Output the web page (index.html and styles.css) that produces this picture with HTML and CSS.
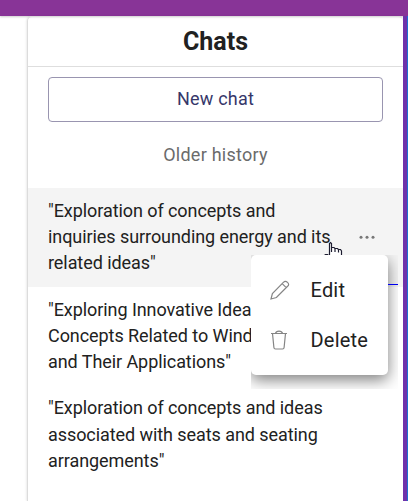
FILE: index.html
```
<!DOCTYPE html>
<html lang="en">
<head>
    <meta charset="UTF-8">
    <meta name="viewport" content="width=device-width, initial-scale=1.0">
    <title>Chats</title>
    <link rel="stylesheet" href="styles.css">
</head>
<body>
    <div class="topbar"></div>
    <div class="page">
        <div class="chat-panel">
            <div class="chat-header">
                <h1>Chats</h1>
            </div>
            <div class="chat-actions">
                <button class="new-chat">New chat</button>
            </div>
            <p class="history-title">Older history</p>
            <ul class="chat-list">
                <li class="chat-item active">
                    <span class="chat-name">"Exploration of concepts and<br>inquiries surrounding energy and its<br>related ideas"</span>
                    <svg class="more" width="16" height="4" viewBox="0 0 16 4">
                        <circle cx="2" cy="2.2" r="1.5"/>
                        <circle cx="8" cy="2.2" r="1.5"/>
                        <circle cx="14" cy="2.2" r="1.5"/>
                    </svg>
                </li>
                <li class="chat-item">
                    <span class="chat-name">"Exploring Innovative Ideas<br>Concepts Related to Wind<br>and Their Applications"</span>
                </li>
                <li class="chat-item">
                    <span class="chat-name">"Exploration of concepts and ideas<br>associated with seats and seating<br>arrangements"</span>
                </li>
            </ul>
        </div>
        <div class="page-edge"></div>
    </div>

    <!-- pointer -->
    <svg class="cursor" width="15" height="22" viewBox="0 0 15 22">
        <path d="M1.5 18V1.5L2.5 .5 3.5 1.5V5.5H6.5L7.5 6.5H9.5L10.5 7.5H12.5L13.5 9V18Z" fill="#fff"/>
        <path d="M1.5 15V1.5L2.5 .5 3.5 1.5V10M4 5.5H6L7 6.5V10M7 6.5H9.5L10.5 7.5V10.5M10.5 7.5H12.5L13.5 9V18M-3.5 13.5L-2.5 12.5H-.5L1.5 14.5" fill="none" stroke="#1c1c30" stroke-width="1.2"/>
    </svg>

    <div class="menu-wrap">
        <div class="menu-line"></div>
        <div class="menu">
            <div class="menu-item">
                <svg class="menu-icon" width="20" height="20" viewBox="0 0 20 20">
                    <path d="M1 19 2.4 13.6 13.6 2.2Q15.3.3 17.5 2.4T17.6 6.3L6.4 17.5ZM12.2 3.6 16.2 7.6"/>
                </svg>
                <span>Edit</span>
            </div>
            <div class="menu-item">
                <svg class="menu-icon" width="20" height="20" viewBox="0 0 20 20">
                    <path d="M1 3.5H17M5.5 3.5Q6 1.2 9 1.2T12.5 3.5M2.5 3.5 3.9 17.5Q4 19 5.5 19H12.5Q14 19 14.1 17.5L15.5 3.5"/>
                </svg>
                <span>Delete</span>
            </div>
        </div>
    </div>
</body>
</html>
```
FILE: styles.css
```
* {
    box-sizing: border-box;
}
body {
    margin: 0;
    height: 501px;
    overflow: hidden;
    background-color: #fff;
    color: #212121;
    font-family: Roboto, sans-serif;
    font-size: 18px;
}
.topbar {
    height: 16px;
    background-color: #883497;
    box-shadow: 0 1px 2px rgba(0, 0, 0, 0.2);
}
.page {
    display: flex;
    height: 485px;
    padding-left: 27px;
}
.chat-panel {
    flex: 1;
    border-left: 1px solid #dcdcdc;
    border-top: 1px solid #dcdcdc;
    border-radius: 5px 5px 0 0;
    box-shadow: -1px 0 2px rgba(0, 0, 0, 0.08);
}
.page-edge {
    width: 5px;
    background-color: #6f32aa;
    border-right: 1px solid #1e6fd0;
}
.chat-header {
    height: 50px;
    border-bottom: 1px solid #dedede;
    text-align: center;
}
.chat-header h1 {
    margin: 0;
    font-size: 25px;
    line-height: 50px;
    font-weight: 700;
}
.chat-actions {
    padding: 10px 20px 0;
}
.new-chat {
    display: block;
    width: 335px;
    height: 45px;
    padding-bottom: 3px;
    border: 1px solid #9995b0;
    border-radius: 4px;
    background-color: #fff;
    color: #36376a;
    font-family: inherit;
    font-size: 18px;
    letter-spacing: 0.2px;
}
.history-title {
    margin: 20px 0;
    color: #6b6b6b;
    line-height: 26px;
    letter-spacing: 0.25px;
    text-align: center;
}
.chat-list {
    margin: 0;
    padding: 0;
    list-style: none;
}
.chat-item {
    display: flex;
    align-items: center;
    justify-content: space-between;
    height: 98.6px;
    padding: 0.2px 28px 0 20px;
    line-height: 26.1px;
    letter-spacing: -0.07px;
}
.chat-item.active {
    background-color: #f4f4f4;
}
.chat-name {
    white-space: nowrap;
}
.more {
    fill: #777;
}
.cursor {
    position: absolute;
    left: 328px;
    top: 242px;
    overflow: visible;
}
.menu-wrap {
    position: absolute;
    left: 251px;
    top: 255px;
    width: 147px;
    height: 134px;
    overflow: hidden;
}
.menu-line {
    position: absolute;
    top: 29px;
    right: 0;
    width: 10px;
    height: 1px;
    background-color: #0000ee;
}
.menu {
    width: 137px;
    height: 120px;
    padding: 10px 0;
    border-radius: 5px;
    background-color: #fff;
    box-shadow: 0 5px 15px rgba(0, 0, 0, 0.5);
}
.menu-item {
    display: flex;
    align-items: center;
    gap: 20.5px;
    height: 50px;
    padding-left: 19px;
    font-size: 20px;
    letter-spacing: 0.2px;
}
.menu-icon {
    fill: none;
    stroke: #858585;
    stroke-width: 1.2;
}
```
